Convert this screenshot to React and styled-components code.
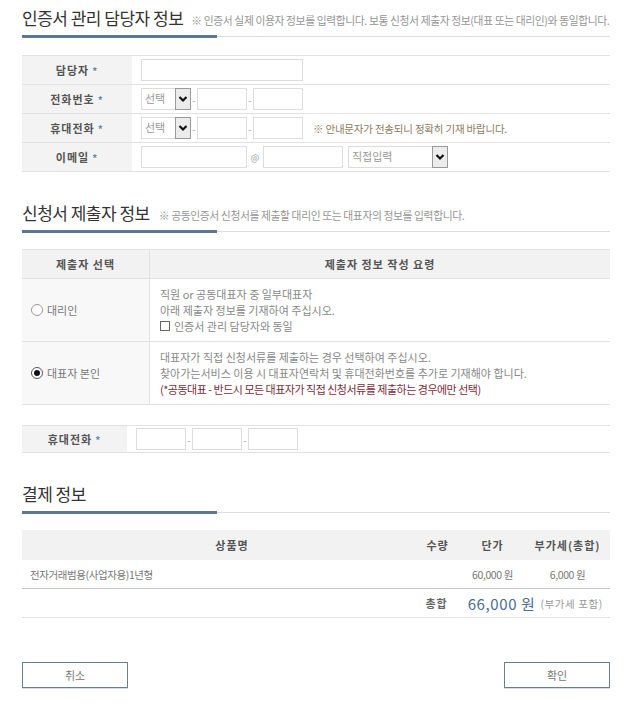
import React from 'react';
import styled, { createGlobalStyle } from 'styled-components';

const GlobalStyle = createGlobalStyle`
  body {
    margin: 0;
    background: #fff;
    font-family: "Noto Sans CJK KR", "Noto Sans", sans-serif;
    color: #555;
  }
`;

const Page = styled.div`
  width: 588px;
  padding: 7px 15px 30px 22px;
`;

const SectionHead = styled.div`
  margin-top: ${p => p.top || 0}px;
`;

const TitleLine = styled.div`
  display: flex;
  align-items: baseline;
  height: 22px;
  white-space: nowrap;
`;

const Title = styled.h2`
  margin: 0;
  font-size: 17px;
  font-weight: 400;
  letter-spacing: -0.5px;
  color: #333;
  line-height: 22px;
`;

const Note = styled.span`
  margin-left: ${p => p.gap || 10}px;
  font-size: 10.8px;
  letter-spacing: -0.4px;
  color: #959595;
`;

const Rule = styled.div`
  margin-top: 6px;
  height: 3px;
  background:
    linear-gradient(#5b7794, #5b7794) left top / 195px 3px no-repeat,
    linear-gradient(#dedede, #dedede) left 1px / 100% 1px no-repeat;
`;

const Table = styled.table`
  width: 100%;
  margin-top: ${p => p.top || 17}px;
  border-collapse: collapse;
  border-top: 1px solid #e2e2e2;
`;

const Label = styled.th`
  width: ${p => p.w}px;
  height: ${p => p.h || 28}px;
  padding: 0;
  background: #f3f3f3;
  border-bottom: 1px solid #e2e2e2;
  font-size: 11px;
  font-weight: bold;
  letter-spacing: 1px;
  color: #555;
  text-align: center;
`;

const Star = styled.span`
  margin-left: 3px;
  color: #6b88a8;
  font-size: 10px;
`;

const Cell = styled.td`
  padding: 0 0 0 ${p => p.pl || 9}px;
  border-bottom: 1px solid #e2e2e2;
`;

const Fields = styled.div`
  display: flex;
  align-items: center;
  height: 22px;
`;

const Input = styled.div`
  box-sizing: border-box;
  width: ${p => p.w}px;
  height: 22px;
  border: 1px solid #dcdcdc;
  background: #fff;
`;

const Dash = styled.span`
  width: ${p => p.w || 6}px;
  text-align: center;
  font-size: 10px;
  color: #aaa;
`;

const Select = styled.div`
  box-sizing: border-box;
  width: ${p => p.w}px;
  height: 22px;
  display: flex;
  justify-content: space-between;
  align-items: stretch;
  border: 1px solid #dcdcdc;
  font-size: 11px;
  color: #999;
`;

const SelectText = styled.span`
  padding-left: 3px;
  line-height: 19px;
`;

const Arrow = styled.span`
  box-sizing: border-box;
  width: 16px;
  margin: -1px -1px -1px 0;
  display: flex;
  align-items: center;
  justify-content: center;
  background: #ececec;
  border: 1px solid #9a9a9a;
`;

const Hint = styled.span`
  margin-left: 10px;
  font-size: 10.5px;
  letter-spacing: -0.2px;
  color: #8a7d5e;
`;

const At = styled.span`
  width: 16px;
  text-align: center;
  font-size: 9px;
  color: #999;
`;

const Chevron = () => (
  <svg width="10" height="8" viewBox="0 0 10 8">
    <polyline points="1.5,2 5,5.5 8.5,2" fill="none" stroke="#111" strokeWidth="2.2" />
  </svg>
);

const DropDown = ({ w, text }) => (
  <Select w={w}>
    <SelectText>{text}</SelectText>
    <Arrow>
      <Chevron />
    </Arrow>
  </Select>
);

const HeadCell = styled.th`
  width: ${p => (p.w ? `${p.w}px` : 'auto')};
  height: 28px;
  padding: 0;
  background: #f2f2f2;
  border-bottom: 1px solid #e2e2e2;
  border-left: ${p => (p.sep ? '1px solid #e2e2e2' : 'none')};
  font-size: 11px;
  font-weight: bold;
  letter-spacing: 1px;
  color: #555;
  text-align: center;
`;

const ChoiceCell = styled.td`
  height: ${p => p.h}px;
  padding: 0 0 0 9px;
  background: #f8f8f8;
  border-bottom: 1px solid #e2e2e2;
  font-size: 11px;
  line-height: 16px;
  color: #777;
`;

const Choice = styled.label`
  display: flex;
  align-items: center;
  gap: 4px;
`;

const Radio = styled.span`
  box-sizing: border-box;
  width: 12px;
  height: 12px;
  border-radius: 50%;
  border: 1px solid ${p => (p.on ? '#555' : '#999')};
  background: #fff;
  display: flex;
  align-items: center;
  justify-content: center;

  &::after {
    content: '';
    width: 6px;
    height: 6px;
    border-radius: 50%;
    background: ${p => (p.on ? '#111' : 'transparent')};
  }
`;

const GuideCell = styled.td`
  padding: 0 0 0 10px;
  border-bottom: 1px solid #e2e2e2;
  border-left: 1px solid #e2e2e2;
  font-size: 11px;
  letter-spacing: 0;
  line-height: 16px;
  color: #888;
`;

const Warn = styled.div`
  color: #7d2b3b;
  letter-spacing: -0.5px;
`;

const Check = styled.div`
  display: flex;
  align-items: center;
  gap: 4px;

  &::before {
    content: '';
    box-sizing: border-box;
    width: 10px;
    height: 10px;
    border: 1px solid #666;
    background: #fff;
  }
`;

const PayGrid = styled.div`
  margin-top: 16px;
  display: grid;
  grid-template-columns: 393px 45px 65px 85px;
  font-size: 11px;
`;

const PayHead = styled.div`
  height: 30px;
  display: flex;
  align-items: center;
  justify-content: center;
  padding-left: ${p => p.pl || 0}px;
  background: #f2f2f2;
  font-weight: bold;
  letter-spacing: 1px;
  color: #555;
`;

const PayCell = styled.div`
  height: 28px;
  display: flex;
  align-items: center;
  justify-content: ${p => (p.left ? 'flex-start' : 'center')};
  padding-left: ${p => (p.left ? 8 : 0)}px;
  border-bottom: 1px solid #c6c6c6;
  font-size: 10.5px;
  letter-spacing: -0.4px;
  color: #777;
`;

const TotalRow = styled.div`
  grid-column: 1 / -1;
  height: 28px;
  display: flex;
  align-items: center;
  justify-content: flex-end;
  padding-right: 7px;
  border-bottom: 1px solid #e2e2e2;
`;

const TotalLabel = styled.span`
  margin-right: 20px;
  font-weight: bold;
  letter-spacing: 1px;
  color: #666;
`;

const Amount = styled.span`
  font-size: 15px;
  letter-spacing: 0.6px;
  color: #4a6d92;
`;

const Vat = styled.span`
  margin-left: 5px;
  font-size: 10.5px;
  letter-spacing: 0.6px;
  color: #999;
`;

const Buttons = styled.div`
  margin-top: 44px;
  display: flex;
  justify-content: space-between;
`;

const Button = styled.button`
  box-sizing: border-box;
  width: 106px;
  height: 26px;
  padding: 0;
  background: #fff;
  border: 1px solid #6d7d8c;
  box-shadow: 0 1px 0 #d3dde7;
  font-family: inherit;
  font-size: 11px;
  color: #777;
`;

export default function App() {
  return (
    <Page>
      <GlobalStyle />

      <SectionHead>
        <TitleLine>
          <Title>인증서 관리 담당자 정보</Title>
          <Note gap={8}>※ 인증서 실제 이용자 정보를 입력합니다. 보통 신청서 제출자 정보(대표 또는 대리인)와 동일합니다.</Note>
        </TitleLine>
        <Rule />
      </SectionHead>

      <Table>
        <tbody>
          <tr>
            <Label w={110}>담당자<Star>*</Star></Label>
            <Cell>
              <Fields>
                <Input w={162} />
              </Fields>
            </Cell>
          </tr>
          <tr>
            <Label w={110}>전화번호<Star>*</Star></Label>
            <Cell>
              <Fields>
                <DropDown w={50} text="선택" />
                <Dash>-</Dash>
                <Input w={50} />
                <Dash>-</Dash>
                <Input w={50} />
              </Fields>
            </Cell>
          </tr>
          <tr>
            <Label w={110}>휴대전화<Star>*</Star></Label>
            <Cell>
              <Fields>
                <DropDown w={50} text="선택" />
                <Dash>-</Dash>
                <Input w={50} />
                <Dash>-</Dash>
                <Input w={50} />
                <Hint>※ 안내문자가 전송되니 정확히 기재 바랍니다.</Hint>
              </Fields>
            </Cell>
          </tr>
          <tr>
            <Label w={110}>이메일<Star>*</Star></Label>
            <Cell>
              <Fields>
                <Input w={106} />
                <At>@</At>
                <Input w={80} />
                <Dash w={5} />
                <DropDown w={100} text="직접입력" />
              </Fields>
            </Cell>
          </tr>
        </tbody>
      </Table>

      <SectionHead top={30}>
        <TitleLine>
          <Title>신청서 제출자 정보</Title>
          <Note gap={9}>※ 공동인증서 신청서를 제출할 대리인 또는 대표자의 정보를 입력합니다.</Note>
        </TitleLine>
        <Rule />
      </SectionHead>

      <Table top={16}>
        <thead>
          <tr>
            <HeadCell w={127}>제출자 선택</HeadCell>
            <HeadCell sep>제출자 정보 작성 요령</HeadCell>
          </tr>
        </thead>
        <tbody>
          <tr>
            <ChoiceCell h={62}>
              <Choice><Radio />대리인</Choice>
            </ChoiceCell>
            <GuideCell>
              <div>직원 or 공동대표자 중 일부대표자</div>
              <div>아래 제출자 정보를 기재하여 주십시오.</div>
              <Check>인증서 관리 담당자와 동일</Check>
            </GuideCell>
          </tr>
          <tr>
            <ChoiceCell h={62}>
              <Choice><Radio on />대표자 본인</Choice>
            </ChoiceCell>
            <GuideCell>
              <div>대표자가 직접 신청서류를 제출하는 경우 선택하여 주십시오.</div>
              <div>찾아가는서비스 이용 시 대표자연락처 및 휴대전화번호를 추가로 기재해야 합니다.</div>
              <Warn>(*공동대표 - 반드시 모든 대표자가 직접 신청서류를 제출하는 경우에만 선택)</Warn>
            </GuideCell>
          </tr>
        </tbody>
      </Table>

      <Table top={20}>
        <tbody>
          <tr>
            <Label w={105} h={26}>휴대전화<Star>*</Star></Label>
            <Cell pl={9}>
              <Fields>
                <Input w={50} />
                <Dash>-</Dash>
                <Input w={50} />
                <Dash>-</Dash>
                <Input w={50} />
              </Fields>
            </Cell>
          </tr>
        </tbody>
      </Table>

      <SectionHead top={30}>
        <TitleLine>
          <Title>결제 정보</Title>
        </TitleLine>
        <Rule />
      </SectionHead>

      <PayGrid>
        <PayHead pl={27}>상품명</PayHead>
        <PayHead>수량</PayHead>
        <PayHead>단가</PayHead>
        <PayHead>부가세(총합)</PayHead>

        <PayCell left>전자거래범용(사업자용)1년형</PayCell>
        <PayCell />
        <PayCell>60,000 원</PayCell>
        <PayCell>6,000 원</PayCell>

        <TotalRow>
          <TotalLabel>총합</TotalLabel>
          <Amount>66,000 원</Amount>
          <Vat>(부가세 포함)</Vat>
        </TotalRow>
      </PayGrid>

      <Buttons>
        <Button type="button">취소</Button>
        <Button type="button">확인</Button>
      </Buttons>
    </Page>
  );
}
